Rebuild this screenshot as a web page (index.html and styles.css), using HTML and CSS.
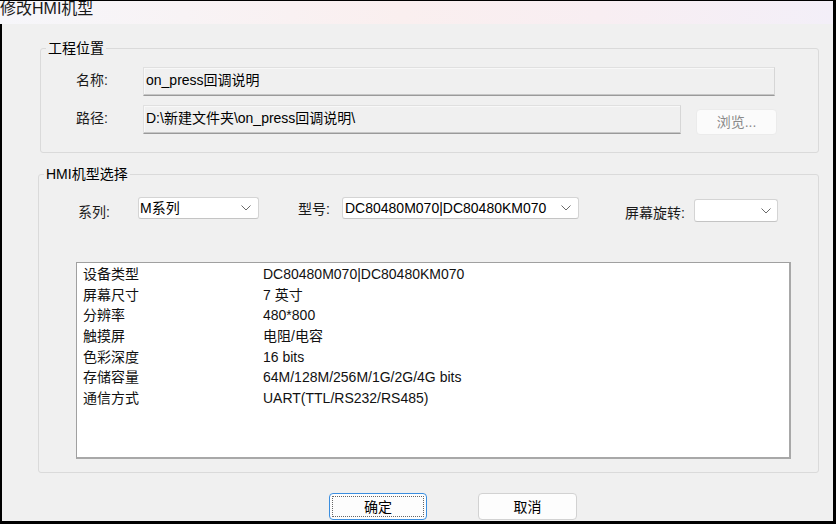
FILE: index.html
```html
<!DOCTYPE html>
<html lang="zh-CN">
<head>
<meta charset="utf-8">
<title>修改HMI机型</title>
<link rel="stylesheet" href="styles.css">
</head>
<body>
<div class="window">
  <div class="titlebar"><span class="title">修改HMI机型</span></div>
  <div class="client">
    <fieldset class="group group-project">
      <legend>工程位置</legend>
      <div class="row row-name">
        <span class="label">名称:</span>
        <div class="field field-name">on_press回调说明</div>
      </div>
      <div class="row row-path">
        <span class="label">路径:</span>
        <div class="field field-path">D:\新建文件夹\on_press回调说明\</div>
        <button class="btn-browse" disabled>浏览...</button>
      </div>
    </fieldset>

    <fieldset class="group group-model">
      <legend>HMI机型选择</legend>
      <div class="combo-row">
        <span class="clabel lbl-series">系列:</span>
        <div class="combo combo-series"><span class="combo-text">M系列</span><svg class="chev" width="10" height="6" viewBox="0 0 10 6"><path d="M0.5 0.5 L5 5 L9.5 0.5" fill="none" stroke="#6a6a6a" stroke-width="1"/></svg></div>
        <span class="clabel lbl-model">型号:</span>
        <div class="combo combo-model"><span class="combo-text">DC80480M070|DC80480KM070</span><svg class="chev" width="10" height="6" viewBox="0 0 10 6"><path d="M0.5 0.5 L5 5 L9.5 0.5" fill="none" stroke="#6a6a6a" stroke-width="1"/></svg></div>
        <span class="clabel lbl-rotate">屏幕旋转:</span>
        <div class="combo combo-rotate"><span class="combo-text"></span><svg class="chev" width="10" height="6" viewBox="0 0 10 6"><path d="M0.5 0.5 L5 5 L9.5 0.5" fill="none" stroke="#6a6a6a" stroke-width="1"/></svg></div>
      </div>
      <div class="listbox">
        <div class="k">设备类型</div><div class="v">DC80480M070|DC80480KM070</div>
        <div class="k">屏幕尺寸</div><div class="v">7 英寸</div>
        <div class="k">分辨率</div><div class="v">480*800</div>
        <div class="k">触摸屏</div><div class="v">电阻/电容</div>
        <div class="k">色彩深度</div><div class="v">16 bits</div>
        <div class="k">存储容量</div><div class="v">64M/128M/256M/1G/2G/4G bits</div>
        <div class="k">通信方式</div><div class="v">UART(TTL/RS232/RS485)</div>
      </div>
    </fieldset>

    <div class="buttons">
      <button class="btn btn-ok">确定</button>
      <button class="btn btn-cancel">取消</button>
    </div>
  </div>
</div>
</body>
</html>
```
FILE: styles.css
```css
html, body {
  margin: 0;
  padding: 0;
  background: #f0f0f0;
}
body {
  font-family: "Liberation Sans", "Noto Sans CJK SC", sans-serif;
  font-size: 14px;
  color: #000;
}
.window {
  width: 836px;
  height: 524px;
  box-sizing: border-box;
  border-top: 1px solid #000;
  border-right: 3px solid #000;
  border-bottom: 3px solid #000;
  display: flex;
  flex-direction: column;
  overflow: hidden;
  background: #f0f0f0;
}
.titlebar {
  height: 23px;
  flex: none;
  display: flex;
  align-items: flex-start;
  background: linear-gradient(90deg, #f6f6fa 0%, #f8f3f5 22%, #faefef 48%, #f8eef2 72%, #f3eff8 100%);
  overflow: hidden;
}
.title {
  font-size: 16px;
  line-height: 16px;
  margin-left: 0;
  color: #1a1a1a;
  white-space: nowrap;
}
.client {
  flex: 1;
  border-left: 2px solid #000;
  display: flex;
  flex-direction: column;
  align-items: flex-start;
}
.group {
  margin: 0;
  padding: 0;
  min-width: 0;
  box-sizing: border-box;
  border: 1px solid #dadada;
  border-radius: 3px;
}
.group legend {
  margin-left: 5px;
  padding: 0 2px;
  line-height: 16px;
  font-size: 14px;
  color: #000;
}
.group-project {
  margin-top: 16px;
  margin-left: 38px;
  width: 779px;
  padding: 11px 0 17px 0;
  display: flex;
  flex-direction: column;
  gap: 9px;
}
.row {
  display: flex;
  align-items: flex-start;
  padding-left: 35px;
}
.label {
  width: 67px;
  flex: none;
  padding-top: 5px;
  line-height: 16px;
  color: #1a1a1a;
}
.field {
  height: 29px;
  box-sizing: border-box;
  padding: 4px 0 0 2px;
  line-height: 16px;
  background: #f0f0f0;
  border: 1px solid #e0e0e0;
  border-right-color: #d6d6d6;
  border-bottom: 1px solid #9a9a9a;
  box-shadow: inset 0 -1px 0 #c6c6c6, inset 1px 1px 0 #f8f8f8;
  white-space: nowrap;
}
.field-name { width: 632px; }
.field-path { width: 538px; }
.btn-browse {
  margin-left: 15px;
  margin-top: 4px;
  width: 81px;
  height: 26px;
  box-sizing: border-box;
  border: 1px solid #ebebeb;
  border-radius: 4px;
  background: #fbfbfb;
  color: #8a8a8a;
  font-family: inherit;
  font-size: 14px;
  line-height: 16px;
  padding: 0;
}
.group-model {
  margin-top: 13px;
  margin-left: 36px;
  width: 781px;
  padding: 15px 0 13px 0;
}
.combo-row {
  display: flex;
  align-items: flex-start;
  padding-left: 39px;
}
.clabel {
  line-height: 16px;
  color: #1a1a1a;
  white-space: nowrap;
}
.lbl-series { width: 60px; margin-top: 7px; }
.lbl-model { margin-left: 39px; width: 44px; margin-top: 4px; }
.lbl-rotate { margin-left: 46px; width: 69px; margin-top: 8px; }
.combo {
  height: 22px;
  box-sizing: border-box;
  display: flex;
  align-items: center;
  justify-content: space-between;
  background: #fff;
  border: 1px solid #d4d4d4;
  border-bottom-color: #c4c4c4;
  border-radius: 3px;
  padding: 0 7px 0 2px;
}
.combo-text {
  line-height: 20px;
  white-space: nowrap;
}
.chev { flex: none; }
.combo-series { width: 121px; padding-left: 1px; }
.combo-model { width: 237px; }
.combo-rotate { width: 84px; height: 23px; margin-top: 2px; padding-right: 6px; }
.listbox {
  margin-top: 40px;
  margin-left: 37px;
  width: 715px;
  height: 197px;
  box-sizing: border-box;
  background: #fff;
  border: 1px solid #a0a0a0;
  border-right: 2px solid #a8a8a8;
  border-bottom: 2px solid #a8a8a8;
  padding: 1px 0 0 6px;
  display: grid;
  grid-template-columns: 180px 1fr;
  grid-auto-rows: 20.67px;
  align-content: start;
}
.listbox .k,
.listbox .v {
  line-height: 20.67px;
  white-space: nowrap;
  color: #111;
}
.buttons {
  margin-top: 20px;
  padding-left: 327px;
  display: flex;
  gap: 51px;
}
.btn {
  height: 27px;
  box-sizing: border-box;
  border-radius: 4px;
  background: #fdfdfd;
  font-family: inherit;
  font-size: 14px;
  line-height: 16px;
  color: #000;
  padding: 0;
}
.btn-ok {
  width: 98px;
  border: 1px solid #3a8ee0;
  outline: 1px dotted #666;
  outline-offset: -4px;
}
.btn-cancel {
  width: 99px;
  border: 1px solid #d2d2d2;
}
```
